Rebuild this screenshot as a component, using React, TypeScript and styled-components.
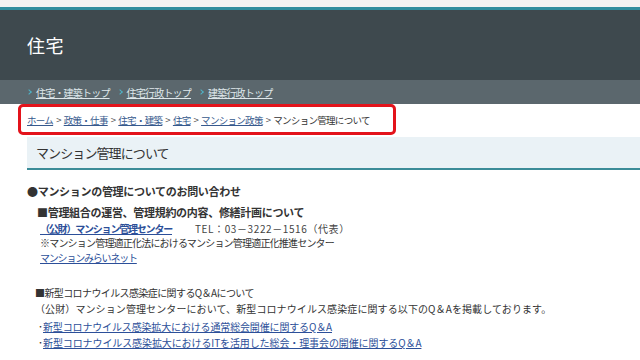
import styled, { createGlobalStyle } from 'styled-components';

const GlobalStyle = createGlobalStyle`
    body {
        margin: 0;
        background: #fff;
        font-family: "Noto Sans CJK JP", "Noto Sans", sans-serif;
        color: #333;
    }
`;

const Page = styled.div`
    width: 640px;
    height: 360px;
    overflow: hidden;
`;

const TopStrip = styled.div`
    height: 7px;
    background: #f1f2f2;
    border-bottom: 3px solid #2f8d9e;
`;

const Header = styled.header`
    height: 70px;
    background: #3e494e;
    display: flex;
    align-items: center;
    padding-left: 27px;
`;

const SiteTitle = styled.h1`
    margin: 0;
    font-size: 18px;
    font-weight: 400;
    color: #fff;
    letter-spacing: 0.5px;
`;

const SubNav = styled.nav`
    height: 24px;
    background: #5b676d;
    display: flex;
    align-items: center;
    padding-left: 27px;
    gap: 8px;
`;

const SubNavItem = styled.a`
    display: flex;
    align-items: center;
    gap: 4px;
    font-size: 10px;
    color: #dfe7eb;
    text-decoration: underline;
    letter-spacing: -0.8px;

    &::before {
        content: "";
        width: 3px;
        height: 3px;
        border-top: 1px solid #4fb3c7;
        border-right: 1px solid #4fb3c7;
        transform: rotate(45deg);
        margin-right: 1px;
    }
`;

const Crumbs = styled.div`
    margin: 0 0 0 18px;
    width: 366px;
    height: 25px;
    border: 3px solid #e3131b;
    border-radius: 5px;
    display: flex;
    align-items: center;
    padding-left: 6px;
    font-size: 9.5px;
    letter-spacing: -0.7px;
    white-space: nowrap;
`;

const CrumbLink = styled.a`
    color: #36598d;
    text-decoration: underline;
`;

const CrumbSep = styled.span`
    color: #555;
    margin: 0 3px;
`;

const CrumbCurrent = styled.span`
    color: #333;
`;

const TitleBox = styled.div`
    margin: 2px 0 0 27px;
    height: 31px;
    background: #eaf2f6;
    border-bottom: 2px solid #3b8c98;
    display: flex;
    align-items: center;
    padding-left: 9px;
    font-size: 13px;
    letter-spacing: -0.9px;
    color: #333;
`;

const Content = styled.div`
    padding-left: 27px;
    padding-top: 13px;
`;

const Line = styled.div<{ $indent?: number; $mt?: number; $bold?: boolean; $size?: number; $lh?: number; $ls?: number }>`
    margin-top: ${p => p.$mt ?? 0}px;
    padding-left: ${p => p.$indent ?? 0}px;
    line-height: ${p => p.$lh ?? 14}px;
    font-size: ${p => p.$size ?? 10}px;
    font-weight: ${p => (p.$bold ? 700 : 400)};
    letter-spacing: ${p => p.$ls ?? -0.45}px;
    white-space: nowrap;
    color: #333;
`;

const Link = styled.a<{ $bold?: boolean; $ls?: number }>`
    color: #2c4f99;
    text-decoration: underline;
    font-weight: ${p => (p.$bold ? 700 : 400)};
    letter-spacing: ${p => (p.$ls !== undefined ? `${p.$ls}px` : 'inherit')};
`;

const Bullet = styled.span`
    display: inline-block;
    width: 5px;
`;

const Tel = styled.span`
    margin-left: 23px;
    color: #444;
    letter-spacing: 0.6px;
`;

const crumbs = ['ホーム', '政策・仕事', '住宅・建築', '住宅', 'マンション政策'];

export default function App() {
    return (
        <Page>
            <GlobalStyle />
            <TopStrip />
            <Header>
                <SiteTitle>住宅</SiteTitle>
            </Header>
            <SubNav>
                <SubNavItem>住宅・建築トップ</SubNavItem>
                <SubNavItem>住宅行政トップ</SubNavItem>
                <SubNavItem>建築行政トップ</SubNavItem>
            </SubNav>
            <Crumbs>
                {crumbs.map(c => (
                    <span key={c}>
                        <CrumbLink>{c}</CrumbLink>
                        <CrumbSep>&gt;</CrumbSep>
                    </span>
                ))}
                <CrumbCurrent>マンション管理について</CrumbCurrent>
            </Crumbs>
            <TitleBox>マンション管理について</TitleBox>
            <Content>
                <Line $bold $size={11} $lh={16} $ls={-0.3}>●マンションの管理についてのお問い合わせ</Line>
                <Line $bold $size={11} $lh={16} $ls={-0.3} $indent={10} $mt={5}>■管理組合の運営、管理規約の内容、修繕計画について</Line>
                <Line $indent={13} $mt={2}>
                    <Link $bold $ls={-1.2}>（公財）マンション管理センター</Link>
                    <Tel>TEL：03－3222－1516（代表）</Tel>
                </Line>
                <Line $indent={13} $ls={-0.8}>※マンション管理適正化法におけるマンション管理適正化推進センター</Line>
                <Line $indent={13} $mt={1} $ls={-1.2}>
                    <Link>マンションみらいネット</Link>
                </Line>
                <Line $indent={8} $mt={21} $ls={-0.6}>■新型コロナウイルス感染症に関するQ＆Aについて</Line>
                <Line $indent={8} $mt={2} $ls={0.1}>（公財）マンション管理センターにおいて、新型コロナウイルス感染症に関する以下のQ＆Aを掲載しております。</Line>
                <Line $indent={11} $mt={4} $ls={-0.15}>
                    <Bullet>･</Bullet><Link>新型コロナウイルス感染拡大における通常総会開催に関するQ＆A</Link>
                </Line>
                <Line $indent={11} $mt={2} $ls={-0.1}>
                    <Bullet>･</Bullet><Link>新型コロナウイルス感染拡大におけるITを活用した総会・理事会の開催に関するQ＆A </Link>
                </Line>
            </Content>
        </Page>
    );
}
